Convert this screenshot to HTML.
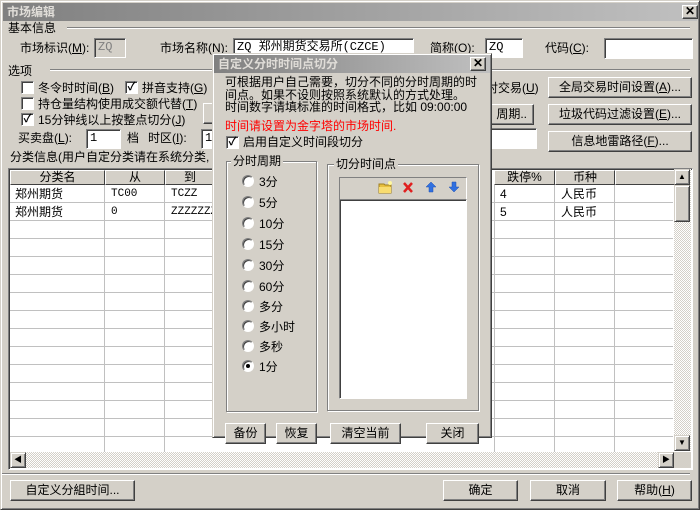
<!DOCTYPE html>
<html><head><meta charset="utf-8"><style>
*{box-sizing:border-box;margin:0;padding:0}
body{width:700px;height:510px;overflow:hidden;background:#d4d0c8;font-family:"Liberation Sans","WenQuanYi Zen Hei","Noto Sans CJK SC",sans-serif;font-size:12px;color:#000;position:relative}
.a{position:absolute;white-space:nowrap;line-height:14px}
.win{position:absolute;left:0;top:0;width:700px;height:510px;border:1px solid;border-color:#d4d0c8 #404040 #404040 #d4d0c8;box-shadow:inset 1px 1px #fff,inset -1px -1px #808080}
.tb{position:absolute;background:linear-gradient(90deg,#808080,#c0c0c0);color:#e0ddd8;font-weight:bold;font-size:12px;line-height:18px;padding-left:4px}
.cl{position:absolute;width:16px;height:14px;background:#d4d0c8;border:1px solid;border-color:#fff #404040 #404040 #fff;box-shadow:inset -1px -1px #808080;font-size:12px;line-height:11px;text-align:center;font-weight:bold;color:#000}
.in{position:absolute;background:#fff;border:1px solid;border-color:#808080 #fff #fff #808080;box-shadow:inset 1px 1px #404040;font-family:"Liberation Mono","WenQuanYi Zen Hei",monospace;font-size:12px;line-height:17px;padding-left:3px;overflow:hidden;white-space:nowrap}
.btn{position:absolute;background:#d4d0c8;border:1px solid;border-color:#fff #404040 #404040 #fff;box-shadow:inset -1px -1px #808080;text-align:center;line-height:18px;white-space:nowrap;overflow:hidden}
.cb{position:absolute;width:13px;height:13px;background:#fff;border:1px solid;border-color:#808080 #fff #fff #808080;box-shadow:inset 1px 1px #404040;font-size:11px;line-height:11px;text-align:center;font-weight:bold}
.hl{position:absolute;height:2px;border-top:1px solid #808080;border-bottom:1px solid #fff}
.gb{position:absolute;border:1px solid #808080;box-shadow:1px 1px #fff,inset 1px 1px #fff}
.gt{position:absolute;background:#d4d0c8;padding:0 2px;line-height:14px;font-size:12px}
.rd{position:absolute;width:12px;height:12px;border-radius:50%;background:#fff;border:1px solid;border-color:#808080 #fff #fff #808080;box-shadow:inset 1px 1px #404040}
.rd.on::after{content:"";position:absolute;left:3px;top:3px;width:4px;height:4px;border-radius:50%;background:#000}
.rl{position:absolute;font-size:12px;line-height:14px}
.hd{position:absolute;top:170px;height:15px;background:#d4d0c8;border:1px solid;border-color:#fff #404040 #404040 #fff;text-align:center;line-height:13px;font-size:12px}
.sb{position:absolute;background:#d4d0c8;border:1px solid;border-color:#d4d0c8 #404040 #404040 #d4d0c8;box-shadow:inset 1px 1px #fff,inset -1px -1px #808080;font-size:8px;text-align:center;line-height:13px}
.dit{position:absolute;background-color:#eae8e4;background-image:repeating-conic-gradient(#d4d0c8 0 25%,#fff 0 50%);background-size:2px 2px}
</style></head><body>
<div class="win"></div>
<div class="tb" style="left:3px;top:3px;width:694px;height:18px">市场编辑</div>
<div class="cl" style="left:682px;top:5px">✕</div>

<div class="a" style="left:8px;top:21px">基本信息</div>
<div class="hl" style="left:67px;top:27px;width:623px"></div>
<div class="a" style="left:20px;top:41px">市场标识(<u>M</u>):</div>
<div class="in" style="left:94px;top:38px;width:32px;height:20px;background:#d4d0c8;color:#808080">ZQ</div>
<div class="a" style="left:160px;top:41px">市场名称(<u>N</u>):</div>
<div class="in" style="left:233px;top:38px;width:181px;height:20px">ZQ 郑州期货交易所(CZCE)</div>
<div class="a" style="left:430px;top:41px">简称(<u>O</u>):</div>
<div class="in" style="left:485px;top:38px;width:38px;height:20px">ZQ</div>
<div class="a" style="left:545px;top:41px">代码(<u>C</u>):</div>
<div class="in" style="left:604px;top:38px;width:89px;height:21px"></div>

<div class="a" style="left:8px;top:64px">选项</div>
<div class="hl" style="left:50px;top:69px;width:640px"></div>
<div class="cb" style="left:21px;top:81px"></div><div class="a" style="left:38px;top:81px">冬令时时间(<u>B</u>)</div>
<div class="cb" style="left:125px;top:81px">✓</div><div class="a" style="left:142px;top:81px">拼音支持(<u>G</u>)</div>
<div class="cb" style="left:21px;top:97px"></div><div class="a" style="left:38px;top:97px">持仓量结构使用成交额代替(<u>T</u>)</div>
<div class="cb" style="left:21px;top:113px">✓</div><div class="a" style="left:38px;top:113px">15分钟线以上按整点切分(<u>J</u>)</div>
<div class="a" style="left:18px;top:131px">买卖盘(<u>L</u>):</div>
<div class="in" style="left:86px;top:129px;width:35px;height:20px">1</div>
<div class="a" style="left:127px;top:131px">档</div>
<div class="a" style="left:148px;top:131px">时区(<u>I</u>):</div>
<div class="in" style="left:201px;top:129px;width:20px;height:20px">12</div>
<div class="btn" style="left:203px;top:103px;width:20px;height:21px"></div>
<div class="a" style="left:10px;top:150px">分类信息(用户自定分类请在系统分类,</div>
<div class="a" style="left:486px;top:81px">对交易(<u>U</u>)</div>
<div class="btn" style="left:470px;top:104px;width:64px;height:21px;text-align:right;padding-right:6px">周期..</div>
<div class="in" style="left:470px;top:128px;width:67px;height:21px"></div>
<div class="btn" style="left:548px;top:77px;width:144px;height:21px">全局交易时间设置(<u>A</u>)...</div>
<div class="btn" style="left:548px;top:104px;width:144px;height:21px">垃圾代码过滤设置(<u>E</u>)...</div>
<div class="btn" style="left:548px;top:131px;width:144px;height:21px">信息地雷路径(<u>F</u>)...</div>

<!-- grid -->
<div style="position:absolute;left:8px;top:168px;width:685px;height:302px;border:1px solid;border-color:#808080 #fff #fff #808080;box-shadow:inset 1px 1px #404040;background:#fff"></div>
<svg style="position:absolute;left:10px;top:185px" width="663" height="267">
<g stroke="#c0c0c0" stroke-width="1">
<line x1="0" y1="17.5" x2="663" y2="17.5"/><line x1="0" y1="35.5" x2="663" y2="35.5"/><line x1="0" y1="53.5" x2="663" y2="53.5"/><line x1="0" y1="71.5" x2="663" y2="71.5"/><line x1="0" y1="89.5" x2="663" y2="89.5"/><line x1="0" y1="107.5" x2="663" y2="107.5"/><line x1="0" y1="125.5" x2="663" y2="125.5"/><line x1="0" y1="143.5" x2="663" y2="143.5"/><line x1="0" y1="161.5" x2="663" y2="161.5"/><line x1="0" y1="179.5" x2="663" y2="179.5"/><line x1="0" y1="197.5" x2="663" y2="197.5"/><line x1="0" y1="215.5" x2="663" y2="215.5"/><line x1="0" y1="233.5" x2="663" y2="233.5"/><line x1="0" y1="251.5" x2="663" y2="251.5"/>
<line x1="94.5" y1="0" x2="94.5" y2="267"/><line x1="154.5" y1="0" x2="154.5" y2="267"/><line x1="484.5" y1="0" x2="484.5" y2="267"/><line x1="544.5" y1="0" x2="544.5" y2="267"/><line x1="604.5" y1="0" x2="604.5" y2="267"/>
</g></svg>
<div class="hd" style="left:10px;width:95px">分类名</div>
<div class="hd" style="left:105px;width:60px">从</div>
<div class="hd" style="left:165px;width:50px">到</div>
<div class="hd" style="left:494px;width:61px">跌停%</div>
<div class="hd" style="left:555px;width:60px">币种</div>
<div class="hd" style="left:615px;width:60px"></div>
<div class="a" style="left:15px;top:187px">郑州期货</div><div class="a" style="left:111px;top:187px;font-family:'Liberation Mono',monospace;font-size:11px">TC00</div><div class="a" style="left:171px;top:187px;font-family:'Liberation Mono',monospace;font-size:11px">TCZZ</div>
<div class="a" style="left:15px;top:205px">郑州期货</div><div class="a" style="left:111px;top:205px;font-family:'Liberation Mono',monospace;font-size:11px">0</div><div class="a" style="left:171px;top:205px;font-family:'Liberation Mono',monospace;font-size:11px">ZZZZZZZ</div>
<div class="a" style="left:500px;top:187px">4</div><div class="a" style="left:561px;top:187px">人民币</div>
<div class="a" style="left:500px;top:205px">5</div><div class="a" style="left:561px;top:205px">人民币</div>
<div class="dit" style="left:674px;top:169px;width:17px;height:282px"></div>
<div class="sb" style="left:674px;top:169px;width:16px;height:16px">▲</div>
<div class="sb" style="left:674px;top:185px;width:16px;height:37px"></div>
<div class="sb" style="left:674px;top:435px;width:16px;height:16px">▼</div>
<div class="dit" style="left:10px;top:452px;width:664px;height:16px"></div>
<div class="sb" style="left:10px;top:452px;width:16px;height:16px">◀</div>
<div class="sb" style="left:658px;top:452px;width:16px;height:16px">▶</div>
<div style="position:absolute;left:674px;top:452px;width:17px;height:16px;background:#d4d0c8"></div>

<div class="hl" style="left:2px;top:473px;width:688px"></div>
<div class="btn" style="left:10px;top:480px;width:125px;height:21px">自定义分組时间...</div>
<div class="btn" style="left:443px;top:480px;width:75px;height:21px">确定</div>
<div class="btn" style="left:530px;top:480px;width:76px;height:21px">取消</div>
<div class="btn" style="left:617px;top:480px;width:75px;height:21px">帮助(<u>H</u>)</div>

<!-- child dialog -->
<div style="position:absolute;left:212px;top:53px;width:280px;height:385px;background:#d4d0c8;border:1px solid;border-color:#d4d0c8 #404040 #404040 #d4d0c8;box-shadow:inset 1px 1px #fff,inset -1px -1px #808080"></div>
<div class="tb" style="left:214px;top:55px;width:276px;height:18px">自定义分时时间点切分</div>
<div class="cl" style="left:470px;top:57px">✕</div>
<div class="a" style="left:225px;top:76px;line-height:12.5px">可根据用户自己需要，切分不同的分时周期的时<br>间点。如果不设则按照系统默认的方式处理。<br>时间数字请填标准的时间格式，比如 09:00:00</div>
<div class="a" style="left:225px;top:119px;color:#f00">时间请设置为金字塔的市场时间.</div>
<div class="cb" style="left:226px;top:136px">✓</div><div class="a" style="left:243px;top:135px">启用自定义时间段切分</div>

<div class="gb" style="left:226px;top:161px;width:91px;height:251px"></div>
<div class="gt" style="left:231px;top:154px">分时周期</div>
<div class="rd" style="left:242px;top:175px"></div><div class="rl" style="left:259px;top:175px">3分</div>
<div class="rd" style="left:242px;top:196px"></div><div class="rl" style="left:259px;top:196px">5分</div>
<div class="rd" style="left:242px;top:217px"></div><div class="rl" style="left:259px;top:217px">10分</div>
<div class="rd" style="left:242px;top:238px"></div><div class="rl" style="left:259px;top:238px">15分</div>
<div class="rd" style="left:242px;top:259px"></div><div class="rl" style="left:259px;top:259px">30分</div>
<div class="rd" style="left:242px;top:280px"></div><div class="rl" style="left:259px;top:280px">60分</div>
<div class="rd" style="left:242px;top:300px"></div><div class="rl" style="left:259px;top:300px">多分</div>
<div class="rd" style="left:242px;top:320px"></div><div class="rl" style="left:259px;top:320px">多小时</div>
<div class="rd" style="left:242px;top:340px"></div><div class="rl" style="left:259px;top:340px">多秒</div>
<div class="rd on" style="left:242px;top:360px"></div><div class="rl" style="left:259px;top:360px">1分</div>

<div class="gb" style="left:327px;top:164px;width:152px;height:247px"></div>
<div class="gt" style="left:334px;top:157px">切分时间点</div>
<div style="position:absolute;left:339px;top:177px;width:128px;height:23px;border:1px solid;border-color:#808080 #fff #fff #808080"></div>
<svg style="position:absolute;left:378px;top:180px" width="85" height="15">
<path d="M1 4h5l1 1h6v8H1z" fill="#e8c040" stroke="#a08020"/><path d="M1 7h12v6H1z" fill="#f8dc70"/><circle cx="12" cy="3" r="2" fill="#fff8a0"/>
<path d="M26 3l8 9M34 3l-8 9" stroke="#e02020" stroke-width="2.5"/>
<path d="M53 2l-5 5h3v5h4v-5h3z" fill="#3070e0" stroke="#2050b0" stroke-width=".5"/>
<path d="M76 12l-5-5h3V2h4v5h3z" fill="#3070e0" stroke="#2050b0" stroke-width=".5"/>
</svg>
<div style="position:absolute;left:339px;top:199px;width:128px;height:200px;background:#fff;border:1px solid;border-color:#808080 #fff #fff #808080;box-shadow:inset 1px 1px #404040"></div>

<div class="btn" style="left:225px;top:423px;width:41px;height:21px">备份</div>
<div class="btn" style="left:276px;top:423px;width:41px;height:21px">恢复</div>
<div class="btn" style="left:330px;top:423px;width:71px;height:21px">清空当前</div>
<div class="btn" style="left:426px;top:423px;width:53px;height:21px">关闭</div>
</body></html>
